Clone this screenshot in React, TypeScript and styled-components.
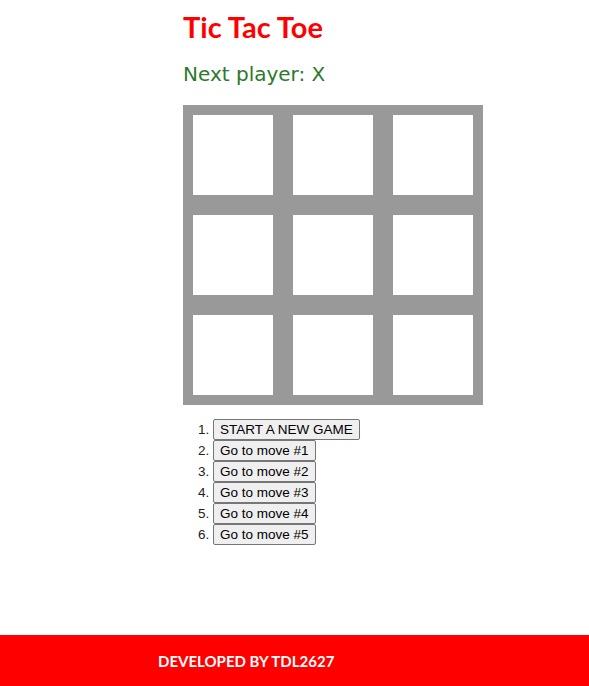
import React from "react";
import styled, { createGlobalStyle } from "styled-components";

const Global = createGlobalStyle`
  html, body { margin: 0; padding: 0; background: #fff; }
  body { font-family: "DejaVu Sans", sans-serif; }
`;

const Page = styled.div`
  min-height: 100vh;
  display: flex;
  flex-direction: column;
`;

const Main = styled.main`
  flex: 1;
  padding-left: 183px;
  padding-top: 10px;
`;

const Title = styled.h1`
  margin: 0;
  font-family: Lato, sans-serif;
  font-weight: bold;
  font-size: 29px;
  line-height: 34px;
  color: #ff0000;
`;

const Status = styled.div`
  margin-top: 16px;
  font-family: "DejaVu Sans", sans-serif;
  font-size: 20px;
  line-height: 28px;
  color: #2b7a2b;
`;

const Board = styled.div`
  margin-top: 17px;
  width: 300px;
  height: 300px;
  box-sizing: border-box;
  background: #999999;
  padding: 10px;
  display: grid;
  grid-template-columns: repeat(3, 80px);
  grid-template-rows: repeat(3, 80px);
  gap: 20px;
`;

const Square = styled.button`
  width: 80px;
  height: 80px;
  background: #fff;
  border: none;
  padding: 0;
  margin: 0;
`;

const Moves = styled.ol`
  margin: 14px 0 0 0;
  padding-left: 30px;
  font-family: "Liberation Sans", Arial, sans-serif;
  font-size: 13.5px;
  color: #222;
`;

const MoveItem = styled.li`
  line-height: 21px;
  height: 21px;
`;

const MoveButton = styled.button`
  font-family: "Liberation Sans", Arial, sans-serif;
  font-size: 13.5px;
  line-height: 15px;
  padding: 1px 6px;
  height: 21px;
  box-sizing: border-box;
  background: #efefef;
  border: 1px solid #767676;
  border-radius: 2px;
  color: #000;
  vertical-align: top;
`;

const Footer = styled.footer`
  height: 51px;
  background: #ff0000;
  display: flex;
  align-items: center;
  padding-left: 158px;
  color: #fff;
  font-family: Lato, sans-serif;
  font-weight: bold;
  font-size: 15px;
`;

export default function App() {
  const moves = ["START A NEW GAME", "Go to move #1", "Go to move #2", "Go to move #3", "Go to move #4", "Go to move #5"];
  return (
    <Page>
      <Global />
      <Main>
        <Title>Tic Tac Toe</Title>
        <Status>Next player: X</Status>
        <Board>
          {Array.from({ length: 9 }).map((_, i) => (
            <Square key={i} />
          ))}
        </Board>
        <Moves>
          {moves.map((m) => (
            <MoveItem key={m}>
              <MoveButton>{m}</MoveButton>
            </MoveItem>
          ))}
        </Moves>
      </Main>
      <Footer>DEVELOPED BY TDL2627</Footer>
    </Page>
  );
}
